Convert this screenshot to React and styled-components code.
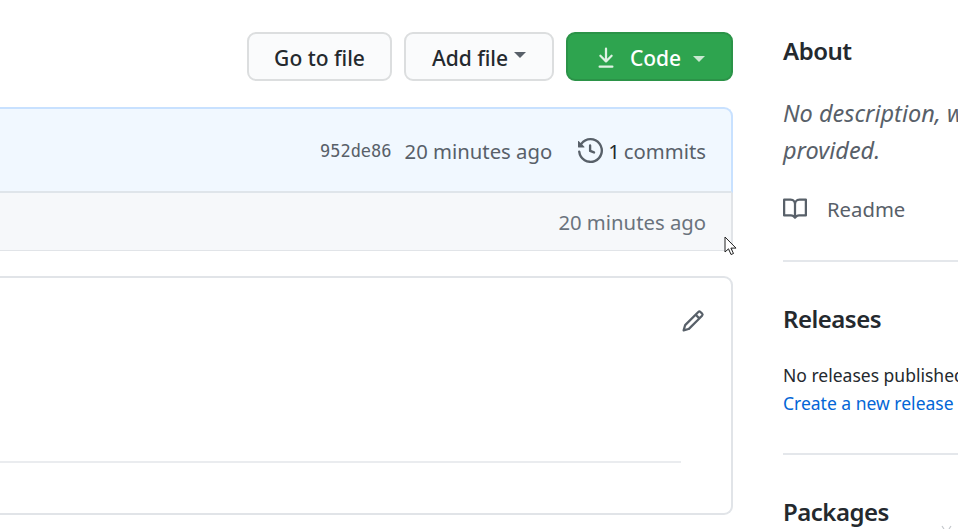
import styled, { createGlobalStyle } from 'styled-components';

const GlobalStyle = createGlobalStyle`
  html, body {
    margin: 0;
    height: 100%;
    overflow: hidden;
    background: #fff;
  }
  body {
    font-family: "Noto Sans", "Open Sans", sans-serif;
    font-size: 20.3px;
    color: #24292e;
  }
`;

const Page = styled.div`
  display: flex;
  width: 958px;
  height: 529px;
  overflow: hidden;
  position: relative;
`;

const Main = styled.main`
  flex: 0 0 773px;
  margin-left: -40px;
  padding-top: 32px;
  box-sizing: border-box;
`;

const Toolbar = styled.div`
  display: flex;
  justify-content: flex-end;
  gap: 12px;
  margin-bottom: 26px;
`;

const Button = styled.div`
  display: flex;
  align-items: center;
  justify-content: center;
  box-sizing: border-box;
  width: ${(props) => props.$width}px;
  height: 49px;
  padding-top: 2px;
  border-radius: 9px;
  border: 2px solid ${(props) => (props.$primary ? '#2b9348' : '#dcdedf')};
  background: ${(props) => (props.$primary ? '#2ea44f' : '#fafbfc')};
  color: ${(props) => (props.$primary ? '#fff' : '#24292e')};
  font-size: 21px;
  font-weight: 500;
`;

const ButtonLabel = styled.span`
  margin-left: ${(props) => props.$left || 0}px;
`;

const Caret = styled.span`
  width: 0;
  height: 0;
  border-style: solid;
  border-width: 6px 6px 0;
  border-color: ${(props) => props.$color} transparent transparent;
  margin-left: ${(props) => props.$left}px;
  margin-top: ${(props) => props.$top}px;
`;

const CommitBox = styled.div`
  border: 2px solid #c8e1ff;
  border-left: none;
  border-bottom: 2px solid #dfe5ea;
  border-radius: 0 9px 0 0;
  height: 86px;
  box-sizing: border-box;
  background: #f1f8ff;
  display: flex;
  align-items: center;
  justify-content: flex-end;
  padding: 1px 25px 0 0;
  color: #586069;
`;

const Sha = styled.span`
  font-family: "DejaVu Sans Mono", monospace;
  font-size: 17px;
  margin-right: 13px;
`;

const History = styled.div`
  display: flex;
  align-items: center;
  margin-left: 26px;
`;

const Count = styled.span`
  color: #24292e;
  margin: 0 4px 0 5px;
`;

const FileRow = styled.div`
  height: 58px;
  box-sizing: border-box;
  background: #f6f8fa;
  border-right: 2px solid #e1e4e8;
  border-bottom: 1.5px solid #e1e4e8;
  display: flex;
  align-items: center;
  justify-content: flex-end;
  padding-right: 25px;
  color: #6a737d;
`;

const ReadmeBox = styled.div`
  margin-top: 25px;
  height: 239px;
  box-sizing: border-box;
  border: 2px solid #e1e4e8;
  border-left: none;
  border-radius: 0 9px 9px 0;
  padding: 31px 26px 0 0;
  display: flex;
  flex-direction: column;
  align-items: flex-end;
  color: #586069;
`;

const Rule = styled.div`
  align-self: stretch;
  height: 2px;
  margin: 128px 24px 0 0;
  background: #eaecef;
`;

const Sidebar = styled.aside`
  flex: 0 0 444px;
  margin-left: 50px;
  padding-top: 35px;
  box-sizing: border-box;
`;

const Section = styled.section`
  padding-bottom: ${(props) => props.$bottom}px;
  border-bottom: ${(props) => (props.$line ? '2px solid #e4e7eb' : 'none')};
  margin-bottom: ${(props) => props.$gap}px;
`;

const Heading = styled.h2`
  margin: 0;
  font-size: 24px;
  line-height: 32px;
  font-weight: 600;
  letter-spacing: -0.5px;
`;

const Description = styled.p`
  margin: 28px 0 0;
  font-size: 23.5px;
  line-height: 37px;
  font-style: italic;
  color: #586069;
`;

const ReadmeLink = styled.div`
  display: flex;
  align-items: center;
  gap: 20px;
  margin-top: 26px;
  color: #586069;
`;

const Text = styled.div`
  font-size: 17.5px;
  line-height: 28px;
  white-space: nowrap;
  margin-top: ${(props) => props.$top || 0}px;
  color: ${(props) => props.$color || '#24292e'};
`;

const Cursor = styled.svg`
  position: absolute;
  left: 724px;
  top: 236px;
`;

const CornerMark = styled.svg`
  position: absolute;
  left: 941px;
  top: 525px;
`;

const Octicon = ({ size, color, d }) => (
  <svg width={size} height={size} viewBox="0 0 16 16" fill={color} fillRule="evenodd">
    <path d={d} />
  </svg>
);

const DOWNLOAD =
  'M7.47 10.78a.75.75 0 001.06 0l3.75-3.75a.75.75 0 00-1.06-1.06L8.75 8.44V1.75a.75.75 0 00-1.5 0v6.69L4.78 5.97a.75.75 0 00-1.06 1.06l3.75 3.75zM3.75 13a.75.75 0 000 1.5h8.5a.75.75 0 000-1.5h-8.5z';
const HISTORY =
  'M1.643 3.143L.427 1.927A.25.25 0 000 2.104V5.75c0 .138.112.25.25.25h3.646a.25.25 0 00.177-.427L2.715 4.215a6.5 6.5 0 11-1.18 4.458.75.75 0 10-1.493.154 8.001 8.001 0 101.6-5.684zM7.75 4a.75.75 0 01.75.75v2.992l2.028.812a.75.75 0 01-.557 1.392l-2.5-1A.75.75 0 017 8.25v-3.5A.75.75 0 017.75 4z';
const PENCIL =
  'M11.013 1.427a1.75 1.75 0 012.474 0l1.086 1.086a1.75 1.75 0 010 2.474l-8.61 8.61c-.21.21-.47.364-.756.445l-3.251.93a.75.75 0 01-.927-.928l.929-3.25a1.75 1.75 0 01.445-.758l8.61-8.61zm1.414 1.06a.25.25 0 00-.354 0L10.811 3.75l1.439 1.44 1.263-1.263a.25.25 0 000-.354l-1.086-1.086zM11.189 6.25L9.75 4.81l-6.286 6.287a.25.25 0 00-.064.108l-.558 1.953 1.953-.558a.249.249 0 00.108-.064l6.286-6.286z';
const BOOK =
  'M0 1.75A.75.75 0 01.75 1h4.253c1.227 0 2.317.59 3 1.501A3.744 3.744 0 0111.006 1h4.245a.75.75 0 01.75.75v10.5a.75.75 0 01-.75.75h-4.507a2.25 2.25 0 00-1.591.659l-.622.621a.75.75 0 01-1.06 0l-.622-.621A2.25 2.25 0 005.258 13H.75a.75.75 0 01-.75-.75V1.75zm8.755 3a2.25 2.25 0 012.25-2.25H14.5v9h-3.757c-.71 0-1.4.201-1.992.572l.004-7.322zm-1.504 7.324l.004-5.073-.002-2.253A2.25 2.25 0 005.003 2.5H1.5v9h3.757a3.75 3.75 0 011.994.574z';

const App = () => {
  return (
    <Page>
      <GlobalStyle />
      <Main>
        <Toolbar>
          <Button $width={145}>Go to file</Button>
          <Button $width={150}>
            Add file
            <Caret $color="#586069" $left={6} $top={-6} />
          </Button>
          <Button $width={167} $primary>
            <Octicon size={24} color="#dff2e4" d={DOWNLOAD} />
            <ButtonLabel $left={12}>Code</ButtonLabel>
            <Caret $color="#c9e8d1" $left={12} $top={3} />
          </Button>
        </Toolbar>
        <CommitBox>
          <Sha>952de86</Sha>
          20 minutes ago
          <History>
            <Octicon size={25} color="#586069" d={HISTORY} />
            <Count>1</Count>
            commits
          </History>
        </CommitBox>
        <FileRow>20 minutes ago</FileRow>
        <ReadmeBox>
          <Octicon size={24} color="#586069" d={PENCIL} />
          <Rule />
        </ReadmeBox>
      </Main>
      <Sidebar>
        <Section $bottom={37} $gap={41} $line>
          <Heading>About</Heading>
          <Description>No description, website, or topics provided.</Description>
          <ReadmeLink>
            <Octicon size={24} color="#586069" d={BOOK} />
            Readme
          </ReadmeLink>
        </Section>
        <Section $bottom={36} $gap={41} $line>
          <Heading>Releases</Heading>
          <Text $top={26}>No releases published</Text>
          <Text $color="#0366d6">Create a new release</Text>
        </Section>
        <Section>
          <Heading>Packages</Heading>
        </Section>
      </Sidebar>
      <Cursor width="14" height="20" viewBox="0 0 14 20">
        <path d="M1 1v15l3.5-3.2L7 18.5l2.5-1-2.6-5.4H12z" fill="#fff" stroke="#222" strokeWidth="1" />
      </Cursor>
      <CornerMark width="12" height="4" viewBox="0 0 12 4">
        <path d="M1 1l2 3M10 1l-2 3" stroke="#c4c8cc" strokeWidth="1.2" fill="none" />
      </CornerMark>
    </Page>
  );
};

export default App;
